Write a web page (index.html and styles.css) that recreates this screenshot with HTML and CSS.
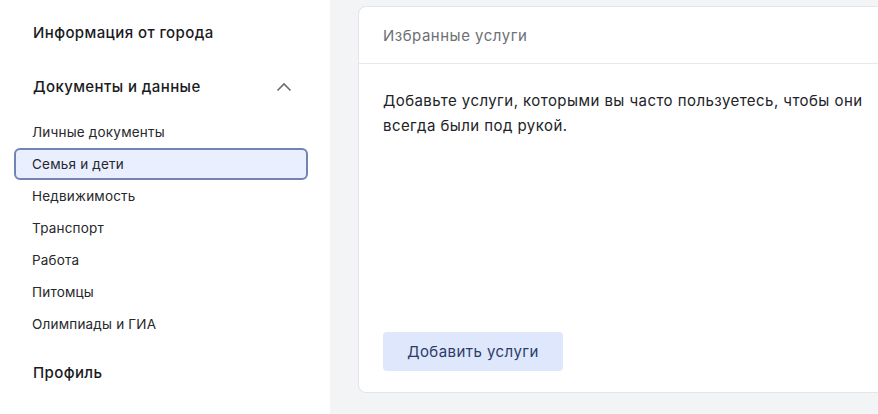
FILE: index.html
```html
<!DOCTYPE html>
<html lang="ru">
<head>
<meta charset="utf-8">
<link rel="stylesheet" href="styles.css">
</head>
<body>
<div class="page">
  <nav class="sidebar">
    <div class="heading h-first">Информация от города</div>
    <div class="heading h-docs">
      <span>Документы и данные</span>
      <svg class="chev" width="16" height="10" viewBox="0 0 16 10"><path d="M1.5 8.5 L8 2 L14.5 8.5" fill="none" stroke="#6b6e73" stroke-width="1.6"/></svg>
    </div>
    <ul class="items">
      <li class="item">Личные документы</li>
      <li class="item active">Семья и дети</li>
      <li class="item">Недвижимость</li>
      <li class="item">Транспорт</li>
      <li class="item">Работа</li>
      <li class="item">Питомцы</li>
      <li class="item">Олимпиады и ГИА</li>
    </ul>
    <div class="heading h-profile">Профиль</div>
  </nav>
  <main class="main">
    <section class="card">
      <header class="card-head">Избранные услуги</header>
      <div class="card-body">
        <p class="card-text">Добавьте услуги, которыми вы часто пользуетесь, чтобы они всегда были под рукой.</p>
        <button class="btn">Добавить услуги</button>
      </div>
    </section>
  </main>
</div>
</body>
</html>
```
FILE: styles.css
```css
html, body {
  margin: 0;
  padding: 0;
  height: 100%;
}
body {
  font-family: Inter, "Noto Sans", sans-serif;
  color: #1f2023;
  background: #f3f4f5;
  overflow: hidden;
}
.page {
  display: flex;
  width: 878px;
  height: 414px;
}
.sidebar {
  width: 330px;
  flex: none;
  background: #ffffff;
  padding-top: 21px;
  box-sizing: border-box;
}
.heading {
  font-size: 15px;
  font-weight: 500;
  letter-spacing: 0.4px;
  line-height: 24px;
  padding-left: 33px;
  color: #1a1b1e;
}
.h-docs {
  margin-top: 30px;
  display: flex;
  align-items: center;
  justify-content: space-between;
  padding-right: 38px;
}
.chev {
  display: block;
}
.items {
  list-style: none;
  margin: 17px 0 0 0;
  padding: 0;
}
.item {
  margin-left: 14px;
  width: 294px;
  height: 32px;
  box-sizing: border-box;
  padding-left: 16px;
  display: flex;
  align-items: center;
  font-size: 13.5px;
  letter-spacing: 0.2px;
  color: #26282b;
  border: 2px solid transparent;
  border-radius: 6px;
}
.item.active {
  background: #e9efff;
  border-color: #7284b2;
  border-width: 2.5px;
}
.h-profile {
  margin-top: 21px;
}
.main {
  flex: 1;
  padding: 6px 0 0 28px;
  min-width: 0;
}
.card {
  background: #ffffff;
  border: 1px solid #e3e5e8;
  border-right: none;
  border-radius: 8px 0 0 8px;
  height: 387px;
  box-sizing: border-box;
  display: flex;
  flex-direction: column;
}
.card-head {
  height: 57px;
  box-sizing: border-box;
  border-bottom: 1px solid #e6e8eb;
  padding-left: 24px;
  display: flex;
  align-items: center;
  font-size: 15px;
  letter-spacing: 0.5px;
  color: #6d7075;
}
.card-body {
  flex: 1;
  padding: 24px 0 21px 24px;
  display: flex;
  flex-direction: column;
  align-items: flex-start;
}
.card-text {
  margin: 0;
  font-size: 15px;
  letter-spacing: 0.44px;
  line-height: 25px;
  color: #222327;
  max-width: 520px;
}
.btn {
  margin-top: auto;
  width: 180px;
  height: 39px;
  border: none;
  border-radius: 4px;
  background: #dee7fb;
  color: #2b3c68;
  font-family: inherit;
  font-size: 15px;
  letter-spacing: 0.45px;
  cursor: pointer;
}
```
